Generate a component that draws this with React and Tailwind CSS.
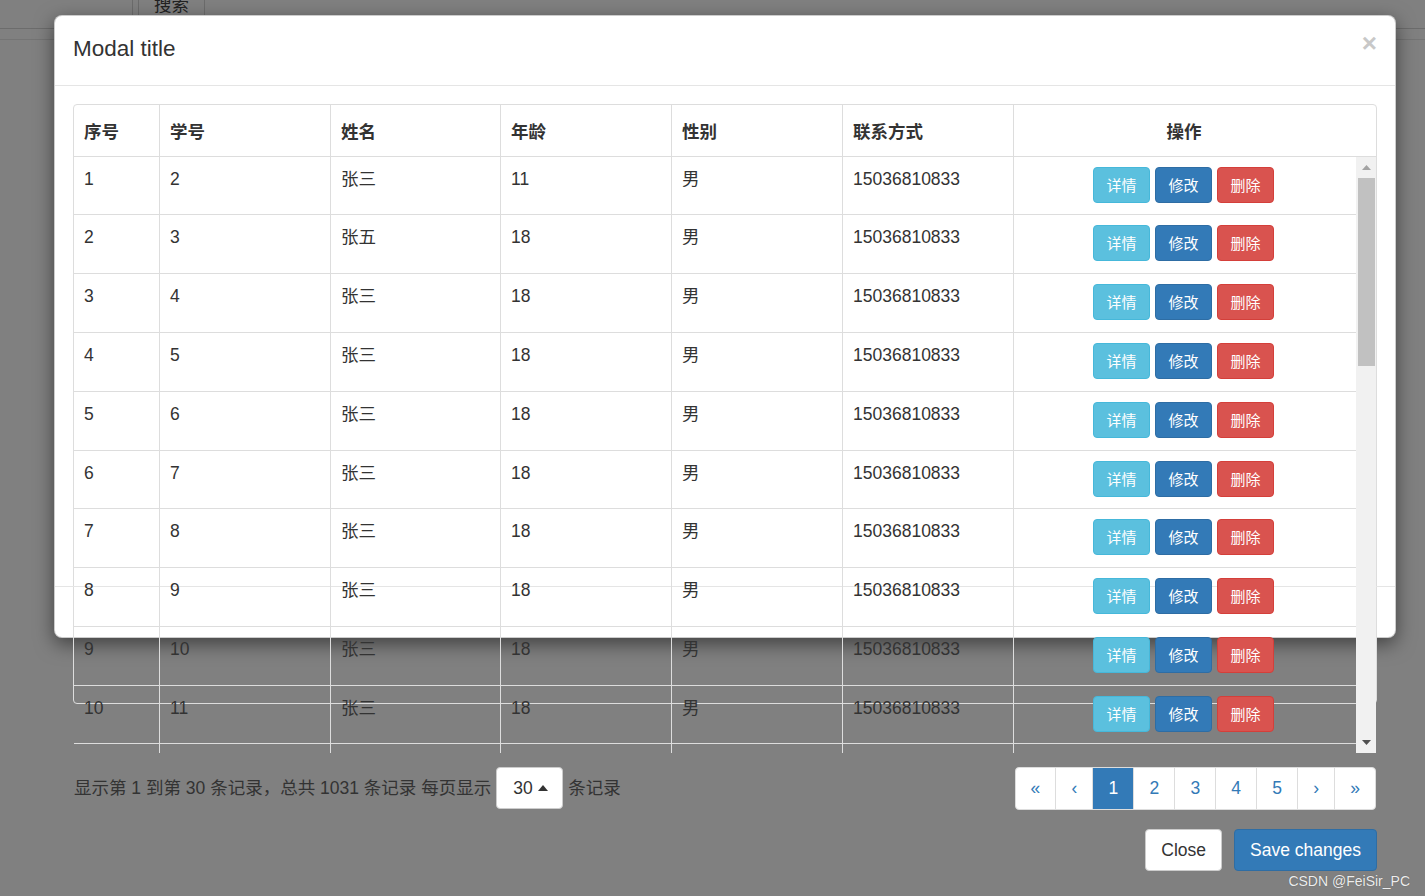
import React from 'react';

const F = "font-['Liberation_Sans','Noto_Sans_CJK_SC',sans-serif]";

const rows = [
  { a: '1', b: '2', c: '张三', d: '11', h: 'h-[58px]' },
  { a: '2', b: '3', c: '张五', d: '18', h: 'h-[59px]' },
  { a: '3', b: '4', c: '张三', d: '18', h: 'h-[59px]' },
  { a: '4', b: '5', c: '张三', d: '18', h: 'h-[59px]' },
  { a: '5', b: '6', c: '张三', d: '18', h: 'h-[59px]' },
  { a: '6', b: '7', c: '张三', d: '18', h: 'h-[58px]' },
  { a: '7', b: '8', c: '张三', d: '18', h: 'h-[59px]' },
  { a: '8', b: '9', c: '张三', d: '18', h: 'h-[59px]' },
  { a: '9', b: '10', c: '张三', d: '18', h: 'h-[59px]' },
  { a: '10', b: '11', c: '张三', d: '18', h: 'h-[58px]' },
];

const cell = 'px-[10px] pt-[10px] leading-[25px] text-[17.5px] text-[#333]';
const btn = 'h-[36px] w-[57px] rounded-[4px] border text-[15px] text-white flex items-center justify-center leading-none';

function Row({ r }) {
  return (
    <div className={`flex shrink-0 ${r.h} border-b border-[#ddd]`}>
      <div className={`w-[85px] ${cell}`}>{r.a}</div>
      <div className={`w-[171px] border-l border-[#ddd] ${cell}`}>{r.b}</div>
      <div className={`w-[170px] border-l border-[#ddd] ${cell}`}>{r.c}</div>
      <div className={`w-[171px] border-l border-[#ddd] ${cell}`}>{r.d}</div>
      <div className={`w-[171px] border-l border-[#ddd] ${cell}`}>男</div>
      <div className={`w-[171px] border-l border-[#ddd] ${cell}`}>15036810833</div>
      <div className="w-[343px] border-l border-[#ddd] pt-[10px] pr-[3px] flex justify-center items-start gap-[5px]">
        <button className={`${btn} bg-[#5bc0de] border-[#46b8da]`}>详情</button>
        <button className={`${btn} bg-[#337ab7] border-[#2e6da4]`}>修改</button>
        <button className={`${btn} bg-[#d9534f] border-[#d43f3a]`}>删除</button>
      </div>
    </div>
  );
}

const thBase = 'pt-[3px] flex items-center font-bold text-[17.5px] text-[#333]';
const th = `px-[10px] ${thBase}`;

function Scrollbar() {
  return (
    <div className="w-[20px] h-[596px] bg-[#f1f1f1] flex flex-col items-center">
      <div className="h-[21px] w-full flex items-center justify-center">
        <svg width="9" height="5" viewBox="0 0 9 5"><polygon points="0,5 9,5 4.5,0" fill="#a3a3a3" /></svg>
      </div>
      <div className="w-[17px] h-[188px] bg-[#c1c1c1]" />
      <div className="flex-1" />
      <div className="h-[21px] w-full flex items-center justify-center">
        <svg width="9" height="5" viewBox="0 0 9 5"><polygon points="0,0 9,0 4.5,5" fill="#505050" /></svg>
      </div>
    </div>
  );
}

const pg = 'h-[41px] px-[15.1px] flex items-center justify-center text-[17.5px] border-l border-[#ddd] first:border-l-0';

export default function App() {
  return (
    <div className={`relative w-[1425px] h-[896px] bg-[#808080] overflow-hidden ${F}`}>
      {/* background page (dimmed by backdrop) */}
      <div className="h-[29px] border-b border-[#6c6c6c] flex">
        <div className="w-[133px] border-r border-[#6c6c6c]" />
        <div className="w-[5px]" />
        <div className="w-[67px] border-x border-[#6c6c6c] flex justify-center">
          <span className="text-[17.5px] leading-none -mt-[3px] text-[#222]">搜索</span>
        </div>
      </div>
      <div className="h-[11px] border-b border-[#747474]" />

      {/* modal */}
      <div className="absolute left-[54px] top-[15px] w-[1342px] bg-white border border-black/20 rounded-[8px] shadow-[0_6px_19px_rgba(0,0,0,0.5)]">
        <div className="h-[70px] border-b border-[#e5e5e5] px-[18px] pt-[17px] flex justify-between items-start">
          <div className="text-[22.5px] leading-[32px] text-[#333]">Modal title</div>
          <div className="text-[26px] leading-none font-bold text-[#c8c8c8] -mt-[3px]">×</div>
        </div>

        <div className="h-[500px] pt-[18px] px-[18px]">
          <div className="w-[1304px] h-[600px] border border-[#ddd] rounded-[4px]">
            <div className="flex h-[52px] border-b border-[#ddd]">
              <div className={`w-[85px] ${th}`}>序号</div>
              <div className={`w-[171px] border-l border-[#ddd] ${th}`}>学号</div>
              <div className={`w-[170px] border-l border-[#ddd] ${th}`}>姓名</div>
              <div className={`w-[171px] border-l border-[#ddd] ${th}`}>年龄</div>
              <div className={`w-[171px] border-l border-[#ddd] ${th}`}>性别</div>
              <div className={`w-[171px] border-l border-[#ddd] ${th}`}>联系方式</div>
              <div className={`w-[363px] border-l border-[#ddd] pr-[22px] justify-center ${thBase}`}>操作</div>
            </div>
            <div className="flex h-[596px]">
              <div className="w-[1282px] h-[596px] flex flex-col">
                {rows.map((r) => (
                  <Row key={r.a} r={r} />
                ))}
                <div className="flex flex-1">
                  <div className="w-[85px]" />
                  <div className="w-[171px] border-l border-[#ddd]" />
                  <div className="w-[170px] border-l border-[#ddd]" />
                  <div className="w-[171px] border-l border-[#ddd]" />
                  <div className="w-[171px] border-l border-[#ddd]" />
                  <div className="w-[171px] border-l border-[#ddd]" />
                  <div className="w-[343px] border-l border-[#ddd]" />
                </div>
              </div>
              <Scrollbar />
            </div>
          </div>

          <div className="mt-[63px] w-[1304px] flex justify-between items-start">
            <div className="flex items-center gap-[5px] text-[17.5px] text-[#333] pl-px">
              <span>显示第 1 到第 30 条记录，总共 1031 条记录 每页显示</span>
              <div className="w-[67px] h-[42px] bg-white border border-[#ccc] rounded-[4px] flex items-center pl-[16px] gap-[5px]">
                <span>30</span>
                <svg width="10" height="6" viewBox="0 0 10 6"><polygon points="0,6 10,6 5,0" fill="#333" /></svg>
              </div>
              <span>条记录</span>
            </div>
            <div className="flex bg-white border border-[#ddd] rounded-[4px] overflow-hidden text-[#337ab7] mr-px">
              <div className={pg}>«</div>
              <div className={pg}>‹</div>
              <div className={`${pg} bg-[#337ab7] text-white`}>1</div>
              <div className={pg}>2</div>
              <div className={pg}>3</div>
              <div className={pg}>4</div>
              <div className={pg}>5</div>
              <div className={pg}>›</div>
              <div className={pg}>»</div>
            </div>
          </div>

          <div className="mt-[19px] w-[1304px] flex justify-end gap-[12px]">
            <button className="h-[42px] px-[15px] bg-white border border-[#ccc] rounded-[4px] text-[17.5px] text-[#333]">Close</button>
            <button className="h-[42px] px-[15px] bg-[#337ab7] border border-[#2e6da4] rounded-[4px] text-[17.5px] text-white">Save changes</button>
          </div>
        </div>

        <div className="h-[51px] border-t border-[#e5e5e5]" />
      </div>

      <div className="absolute right-[15px] bottom-[8px] text-[14px] leading-none text-[#ededed] [text-shadow:0_0_1px_rgba(0,0,0,0.4)]">
        CSDN @FeiSir_PC
      </div>
    </div>
  );
}
